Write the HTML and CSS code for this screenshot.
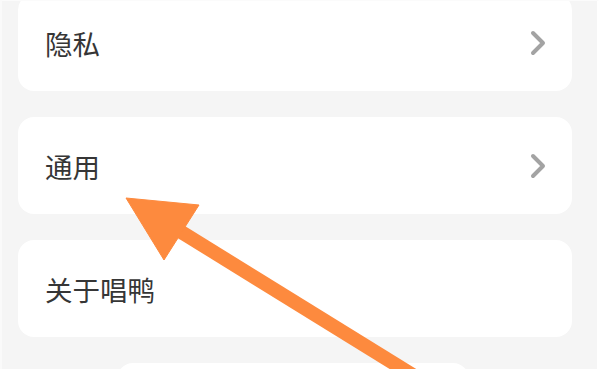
FILE: index.html
```html
<!DOCTYPE html>
<html lang="zh-CN">
<head>
<meta charset="utf-8">
<link rel="stylesheet" href="styles.css">
</head>
<body>
<div class="page">
  <div class="list">
    <div class="card first">
      <span class="label">隐私</span>
      <svg class="chev" width="16" height="26" viewBox="0 0 16 26"><polyline points="3,3 13,13 3,23" fill="none" stroke="#a3a3a3" stroke-width="4" stroke-linecap="round" stroke-linejoin="round"/></svg>
    </div>
    <div class="card">
      <span class="label">通用</span>
      <svg class="chev" width="16" height="26" viewBox="0 0 16 26"><polyline points="3,3 13,13 3,23" fill="none" stroke="#a3a3a3" stroke-width="4" stroke-linecap="round" stroke-linejoin="round"/></svg>
    </div>
    <div class="card">
      <span class="label">关于唱鸭</span>
    </div>
    <div class="bottom-btn"></div>
  </div>
  <svg class="arrow" width="600" height="369" viewBox="0 0 600 369">
    <line x1="178" y1="230" x2="445" y2="395" stroke="#fd8a3e" stroke-width="14"/>
    <polygon points="126,198 199,205 164,260" fill="#fd8a3e" stroke="#fd8a3e" stroke-width="1" stroke-linejoin="round"/>
  </svg>
</div>
</body>
</html>
```
FILE: styles.css
```css
html, body {
  margin: 0;
  padding: 0;
  background: #f5f5f5;
}
.page {
  position: relative;
  width: 600px;
  height: 369px;
  overflow: hidden;
  box-sizing: border-box;
  border-left: 2px solid #fafafa;
  border-right: 3px solid #ffffff;
  border-top: 1px solid #fbfbfb;
}
.list {
  display: flex;
  flex-direction: column;
  gap: 26px;
  padding: 0 25px 0 16px;
  margin-top: -7px;
}
.card {
  background: #ffffff;
  border-radius: 16px;
  height: 97px;
  display: flex;
  align-items: center;
  justify-content: space-between;
  padding: 0 26px 0 27px;
  box-sizing: border-box;
}
.label {
  font-family: "Noto Sans CJK SC", "Noto Sans", sans-serif;
  font-size: 27.5px;
  color: #363636;
  letter-spacing: 0;
}
.chev {
  display: block;
}
.bottom-btn {
  align-self: flex-start;
  margin-left: 99px;
  width: 352px;
  height: 40px;
  background: #ffffff;
  border-radius: 16px 16px 0 0;
}
.arrow {
  position: absolute;
  left: -2px;
  top: -1px;
}
```
